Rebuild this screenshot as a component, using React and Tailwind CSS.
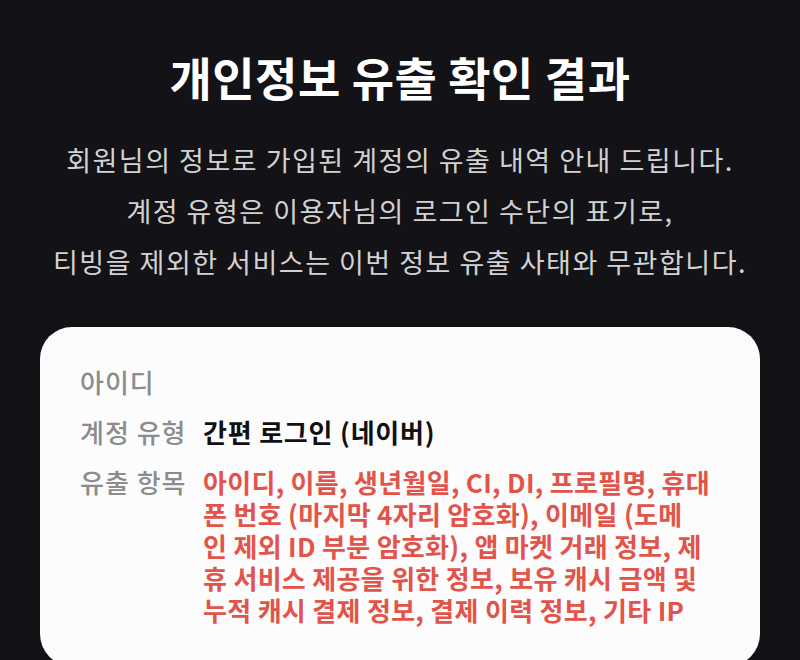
const font = { fontFamily: '"Noto Sans CJK KR", "Noto Sans", sans-serif' };

const Row = ({ label, children, className }) => (
  <div className="flex gap-[18px]">
    <div className="shrink-0 w-[105px] text-[26px] leading-[32px] font-medium text-[#8c8c8c] tracking-[1px] whitespace-nowrap">{label}</div>
    <div className={className}>{children}</div>
  </div>
);

export default function App() {
  return (
    <div style={font} className="w-[800px] h-[660px] overflow-hidden bg-[#131217] flex flex-col items-center">
      <h1 className="mt-[48px] text-[46px] leading-[56px] font-bold text-white tracking-[0.5px]">개인정보 유출 확인 결과</h1>
      <div className="mt-[30px] text-center text-[27px] leading-[51px] text-[#d2d2d2] tracking-[1.5px]">
        <p>회원님의 정보로 가입된 계정의 유출 내역 안내 드립니다.</p>
        <p>계정 유형은 이용자님의 로그인 수단의 표기로,</p>
        <p>티빙을 제외한 서비스는 이번 정보 유출 사태와 무관합니다.</p>
      </div>
      <div className="mt-[40px] w-[720px] shrink-0 bg-[#fcfcfc] rounded-[32px] pt-[39px] pb-[40px] px-[40px] flex flex-col gap-[18px]">
        <Row label="아이디" className="flex-1" />
        <Row label="계정 유형" className="flex-1 text-[26px] leading-[32px] font-bold text-[#111] tracking-[0.8px]">
          간편 로그인 (네이버)
        </Row>
        <Row label="유출 항목" className="w-[540px] text-[26px] leading-[32px] font-bold text-[#e2544a] tracking-[0.3px] whitespace-nowrap">
          아이디, 이름, 생년월일, CI, DI, 프로필명, 휴대<br />
          폰 번호 (마지막 4자리 암호화), 이메일 (도메<br />
          인 제외 ID 부분 암호화), 앱 마켓 거래 정보, 제<br />
          휴 서비스 제공을 위한 정보, 보유 캐시 금액 및<br />
          누적 캐시 결제 정보, 결제 이력 정보, 기타 IP
        </Row>
      </div>
    </div>
  );
}
